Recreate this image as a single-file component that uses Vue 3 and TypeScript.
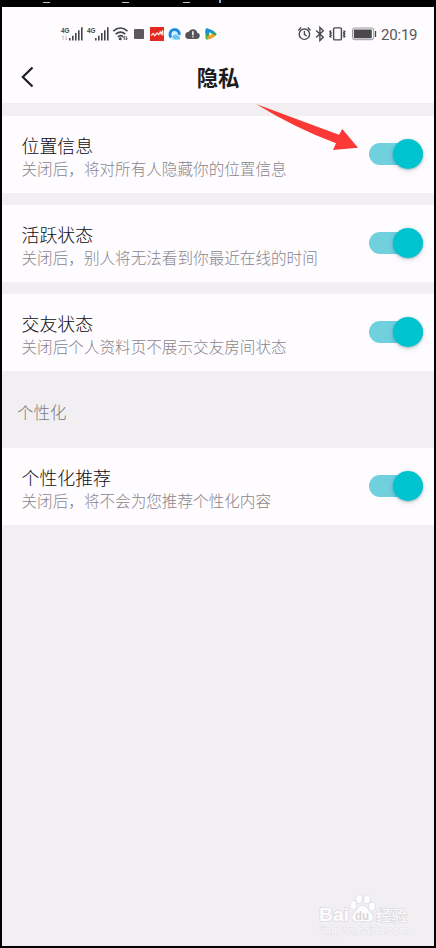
<script setup lang="ts">
import { ref } from 'vue'

interface Setting {
  title: string
  hint: string
  on: boolean
}

const general = ref<Setting[]>([
  { title: '位置信息', hint: '关闭后，将对所有人隐藏你的位置信息', on: true },
  { title: '活跃状态', hint: '关闭后，别人将无法看到你最近在线的时间', on: true },
  { title: '交友状态', hint: '关闭后个人资料页不展示交友房间状态', on: true },
])

const personal = ref<Setting[]>([
  { title: '个性化推荐', hint: '关闭后，将不会为您推荐个性化内容', on: true },
])
</script>

<template>
  <div class="frame">
    <svg class="edge" width="436" height="7" viewBox="0 0 436 7">
      <path d="M43 2.5h7M122 2.5h7M183 2.5h7" stroke="#c9c2b4" />
      <path d="M219.5 0v3" stroke="#c9a56a" />
      <path d="M220.5 0v3" stroke="#8aa5e0" />
    </svg>

    <main class="screen">
      <div class="status">
        <svg class="left-icons" width="160" height="20" viewBox="60 24 160 20">
          <g fill="#444347">
            <text class="net" x="61" y="32.6" textLength="8.5" lengthAdjust="spacingAndGlyphs">4G</text>
            <text class="net" x="87" y="32.6" textLength="8.5" lengthAdjust="spacingAndGlyphs">4G</text>
            <path d="M69 38h1.6v2.5H69zM72 35.8h1.6v4.7H72zM75 33h1.6v7.5H75zM78 30.2h1.6v10.3H78zM81 27.2h1.6v13.3H81z" />
            <path d="M95 38h1.6v2.5H95zM98 35.8h1.6v4.7H98zM101 33h1.6v7.5h-1.6zM104 30.2h1.6v10.3H104zM107 27.2h1.6v13.3H107z" />
          </g>
          <path d="M63 40v-4.2l-1 1.2M66 35.5v4.5l1-1.2" fill="none" stroke="#bbb9be" stroke-width=".9" />
          <g fill="none" stroke="#444347" stroke-width="1.6">
            <path d="M113.2 31.2q7.3-6.4 14.3 0M115.6 34.2q4.9-4.3 9.7 0M117.7 36.9q2.8-2.5 5.200-.3" />
          </g>
          <circle cx="120.2" cy="38.8" r="1.5" fill="#444347" />
          <path d="M124.2 40v-3.8l-1.2 1.5M126.2 36v4l1.4-1.6" fill="none" stroke="#55535a" stroke-width="1" />
          <rect x="134" y="29" width="10" height="10" rx="1" fill="#5b595d" />
          <rect x="150" y="27" width="14" height="14" fill="#e32a20" />
          <path d="M151.2 35.500l2-2 1.500 2.200 2.300-2.700 1.700 1.700 1.500-2.700 1 2 1.600-3.500v5" fill="none" stroke="#ffe7df" stroke-width="1.300" />
          <circle cx="174.7" cy="34" r="6.4" fill="#d8edfb" />
          <path d="M171.1 37.4a4.7 4.7 0 1 1 8.2-2.6" fill="none" stroke="#168be3" stroke-width="2.7" />
          <path d="M174.2 39.5h5.5a2.4 2.4 0 0 0-1.7-3.8 3.3 3.3 0 0 0-5.7 1.3" fill="#66c8f1" />
          <path d="M189 39h8a3.2 3.2 0 0 0 .3-6.3A4.7 4.7 0 0 0 188.5 32 3.5 3.5 0 0 0 189 39z" fill="#565459" />
          <path d="M192.9 31.3v4M192.9 36.3v1.3" stroke="#fefcff" stroke-width="1.5" />
          <path d="M205.5 30.2q0-2.200 2-1.600 5.200 1.700 8.600 4.600 1.200 1-.1 2-4.300 3.500-8.500 4.300-2 .2-2-1.600z" fill="#35a94c" />
          <path d="M205.5 34v-4q.2-2 2-1.400 4.200 1.200 7.500 3.800z" fill="#1693d6" />
          <path d="M207.3 39.5q4.700-.9 8.700-4.300l-4.500-1.200-5 3z" fill="#f49c24" />
          <path d="M209.3 32v4l3.200-1.900z" fill="#fff4d6" />
        </svg>
        <svg class="right-icons" width="80" height="20" viewBox="297 24 80 20">
          <g fill="none" stroke="#4a494d" stroke-width="1.4">
            <circle cx="304.4" cy="34.2" r="5.2" />
            <path d="M304.4 31v3.5l2.4 1.500M298.3 30.4l2.800-2.900M307.7 27.500l2.800 2.900" />
            <path d="M316.1 30.6l7.2 6.700-3.400 3.300V27.4l3.400 3.300-7.200 6.700" />
            <rect x="333.6" y="27.9" width="7.8" height="12" rx="1.2" />
            <path d="M331.2 30.500l-1.300 1.200 1.300 1.200-1.300 1.200 1.300 1.200-1.300 1.200 1.300 1M343.500 30.500l1.300 1.200-1.300 1.200 1.300 1.200-1.300 1.200 1.300 1.200-1.300 1" />
          </g>
          <rect x="352.5" y="28" width="21.2" height="11.7" rx="2" fill="none" stroke="#98969a" />
          <rect x="353.8" y="29.5" width="18" height="8.8" fill="#4b494d" />
          <path d="M375.5 31v6" stroke="#4b494d" stroke-width="1.3" />
        </svg>
        <span class="clock">20:19</span>
      </div>

      <header class="nav">
        <svg class="back" width="16" height="24" viewBox="0 0 16 24">
          <path d="M12.5 2.500L2.800 12l9.700 9.500" fill="none" stroke="#1d1c20" stroke-width="2.200" />
        </svg>
        <h1>隐私</h1>
      </header>

      <div class="group">
        <section v-for="item in general" :key="item.title" class="row">
          <div class="copy">
            <h2>{{ item.title }}</h2>
            <p>{{ item.hint }}</p>
          </div>
          <button class="toggle" :class="{ on: item.on }" role="switch" :aria-checked="item.on" @click="item.on = !item.on">
            <span class="knob"></span>
          </button>
        </section>
      </div>

      <h3 class="caption">个性化</h3>

      <div class="group">
        <section v-for="item in personal" :key="item.title" class="row">
          <div class="copy">
            <h2>{{ item.title }}</h2>
            <p>{{ item.hint }}</p>
          </div>
          <button class="toggle" :class="{ on: item.on }" role="switch" :aria-checked="item.on" @click="item.on = !item.on">
            <span class="knob"></span>
          </button>
        </section>
      </div>
    </main>

    <svg class="arrow" width="104" height="48" viewBox="255 103 104 48">
      <path d="M256 104L339 134.800 342.300 129 358 147.800 333 150 336 143.300Q296 128.500 256 104z" fill="#fb3a37" />
    </svg>

    <svg class="mark" width="96" height="46" viewBox="316 892 96 46">
      <g fill="#fdfcfe" stroke="#dedce0" stroke-width="1.6" paint-order="stroke">
        <text class="brand" x="319" y="921" textLength="30" lengthAdjust="spacingAndGlyphs">Bai</text>
        <ellipse cx="353.3" cy="905" rx="3" ry="3.9" />
        <ellipse cx="359.2" cy="899" rx="3" ry="4" />
        <ellipse cx="367" cy="899.5" rx="3" ry="4" />
        <ellipse cx="372" cy="906.5" rx="3" ry="3.9" />
        <path d="M362.5 905.500c4 0 5 4.300 8.300 7.200 4.500 4.300 1.400 9.600-3.500 8.800q-4.800-.8-9.600 0c-5 .6-7.500-4.700-3-8.800 3.200-2.900 3.900-7.200 7.800-7.200z" />
        <text class="cn" x="376" y="920.5" textLength="31" lengthAdjust="spacingAndGlyphs">经验</text>
      </g>
      <text class="du" x="355" y="919.5" textLength="14" lengthAdjust="spacingAndGlyphs">du</text>
      <text class="site" x="320" y="933.5" textLength="88" lengthAdjust="spacingAndGlyphs">jingyan.baidu.com</text>
    </svg>
  </div>
</template>

<style>
body {
  margin: 0;
  background: #000;
}
</style>

<style scoped>
.frame {
  position: relative;
  box-sizing: border-box;
  width: 436px;
  height: 948px;
  padding: 0 2px 2px;
  display: flex;
  flex-direction: column;
  background: #000;
  font-family: "Noto Sans CJK SC", sans-serif;
}
.edge {
  flex: none;
  display: block;
  margin-left: -2px;
}
.screen {
  flex: 1;
  display: flex;
  flex-direction: column;
  background: #f1eff2;
}
.status {
  display: flex;
  align-items: center;
  height: 54px;
  box-sizing: border-box;
  padding: 0 16px 0 58px;
  background: #fefcff;
}
.right-icons {
  margin-left: auto;
}
.clock {
  width: 37px;
  margin-left: 4px;
  padding-top: 1px;
  font: 15px/20px Roboto, sans-serif;
  letter-spacing: -0.2px;
  color: #59575c;
  white-space: nowrap;
}
.net {
  font: bold 7px "Liberation Sans", sans-serif;
}
.nav {
  display: grid;
  grid-template-columns: 40px 1fr 40px;
  align-items: center;
  height: 42px;
  background: #fefcff;
}
.back {
  margin: -10px 0 0 18px;
}
h1, h2, h3, p {
  margin: 0;
  font-weight: 400;
}
h1 {
  margin-top: -10px;
  font-size: 21.3px;
  font-weight: 700;
  line-height: 30px;
  text-align: center;
  color: #1d1c20;
}
.group {
  display: flex;
  flex-direction: column;
  gap: 12px;
}
.nav + .group {
  margin-top: 13px;
}
.row {
  display: flex;
  align-items: center;
  justify-content: space-between;
  box-sizing: border-box;
  height: 77px;
  padding: 0 11px 0 19.5px;
  background: #fefcff;
}
.copy {
  padding-top: 3px;
}
h2 {
  font-size: 17.9px;
  line-height: 24px;
  color: #0c0b0f;
  font-weight: 300;
}
p {
  font-size: 15.6px;
  line-height: 22px;
  color: #88868b;
  font-weight: 300;
  white-space: nowrap;
}
.caption {
  height: 77px;
  padding: 3px 0 0 15px;
  box-sizing: border-box;
  font-size: 16.5px;
  font-weight: 300;
  line-height: 76px;
  color: #7c7a7f;
}
.toggle {
  display: flex;
  align-items: center;
  width: 54px;
  height: 22px;
  margin-top: -1px;
  padding: 0;
  border: 0;
  border-radius: 11px;
  background: #c9c7cb;
}
.toggle.on {
  justify-content: flex-end;
  background: #70d0de;
}
.knob {
  width: 30px;
  height: 30px;
  border-radius: 50%;
  background: #fff;
  box-shadow: 0 1px 3px rgba(0, 70, 80, 0.35), 0 3px 10px rgba(0, 0, 0, 0.06);
}
.on .knob {
  background: #00c3d0;
}
.arrow {
  position: absolute;
  left: 255px;
  top: 103px;
}
.mark {
  position: absolute;
  left: 316px;
  top: 892px;
}
.brand {
  font: bold 18px "Liberation Sans", sans-serif;
}
.cn {
  font: 15px "Noto Sans CJK SC", sans-serif;
}
.du {
  font: bold 13px "Liberation Sans", sans-serif;
  fill: #d8d6da;
}
.site {
  font: 11px "Liberation Sans", sans-serif;
  fill: #faf9fb;
  stroke: #e3e1e5;
  stroke-width: 1px;
  paint-order: stroke;
}
</style>
